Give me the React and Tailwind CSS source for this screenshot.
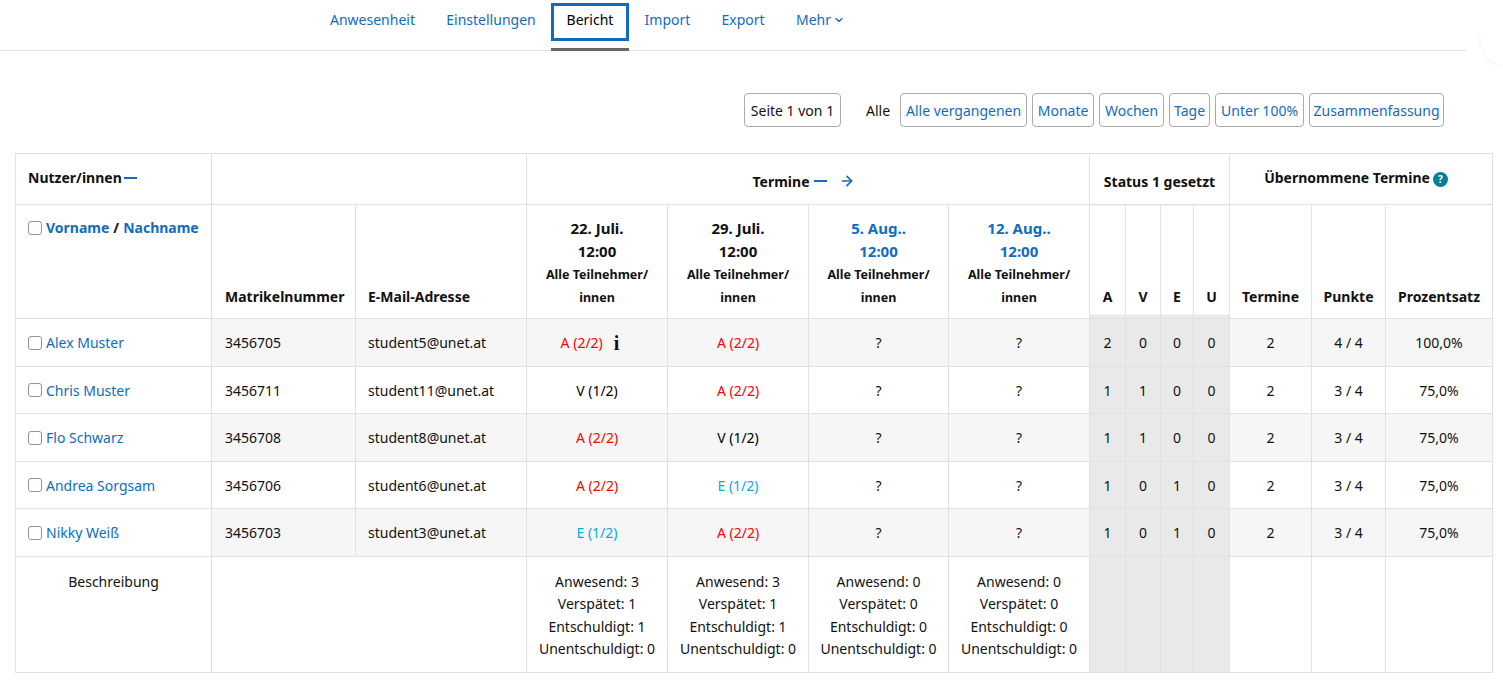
import { ChevronDown, ArrowRight } from 'lucide-react';

const tabs = [
    { label: 'Anwesenheit', width: 'w-[117px]' },
    { label: 'Einstellungen', width: 'w-[120px]' },
    { label: 'Bericht', width: 'w-[78px]' },
    { label: 'Import', width: 'w-[77px]' },
    { label: 'Export', width: 'w-[74px]' },
];
const filters = [
    { label: 'Alle vergangenen', width: 'w-[127px]' },
    { label: 'Monate', width: 'w-[62px]' },
    { label: 'Wochen', width: 'w-[65px]' },
    { label: 'Tage', width: 'w-[41px]' },
    { label: 'Unter 100%', width: 'w-[89px]' },
    { label: 'Zusammenfassung', width: 'w-[135px]' },
];

const dates = [
    { day: '22. Juli.', link: false },
    { day: '29. Juli.', link: false },
    { day: '5. Aug..', link: true },
    { day: '12. Aug..', link: true },
];

const statusColor = {
    A: 'text-[#ff0000]',
    V: 'text-black',
    E: 'text-[#06a9e6]',
};

const students = [
    { name: 'Alex Muster', id: '3456705', mail: 'student5@unet.at', s1: 'A (2/2)', s2: 'A (2/2)', counts: [2, 0, 0, 0], points: '4 / 4', pct: '100,0%', info: true },
    { name: 'Chris Muster', id: '3456711', mail: 'student11@unet.at', s1: 'V (1/2)', s2: 'A (2/2)', counts: [1, 1, 0, 0], points: '3 / 4', pct: '75,0%' },
    { name: 'Flo Schwarz', id: '3456708', mail: 'student8@unet.at', s1: 'A (2/2)', s2: 'V (1/2)', counts: [1, 1, 0, 0], points: '3 / 4', pct: '75,0%' },
    { name: 'Andrea Sorgsam', id: '3456706', mail: 'student6@unet.at', s1: 'A (2/2)', s2: 'E (1/2)', counts: [1, 0, 1, 0], points: '3 / 4', pct: '75,0%' },
    { name: 'Nikky Weiß', id: '3456703', mail: 'student3@unet.at', s1: 'E (1/2)', s2: 'A (2/2)', counts: [1, 0, 1, 0], points: '3 / 4', pct: '75,0%' },
];

const summaries = [
    [3, 1, 1, 0],
    [3, 1, 1, 0],
    [0, 0, 0, 0],
    [0, 0, 0, 0],
];

const cell = 'border border-[#dee2e6] p-0';
const body = 'border border-[#dee2e6] p-0 pt-[1px]';

const Check = () => (
    <span className="inline-block w-[14px] h-[14px] rounded-[3px] border border-[#8f959e] bg-white shrink-0" />
);

const App = () => {
    return (
        <div className="relative w-[1503px] h-[680px] overflow-hidden bg-white text-[14px] text-[#111] font-['Noto_Sans','Open_Sans',sans-serif]">
            {/* Tabs */}
            <div className="w-[1466px] h-[51px] border-b border-[#dee2e6] flex items-start pl-[314px]">
                {tabs.map((tab) => (
                    tab.label === 'Bericht' ? (
                        <div key={tab.label} className={`${tab.width} h-[51px] pt-[3px] border-b-[3px] border-[#666]`}>
                            <div className="h-[38px] pb-[5px] border-[3px] border-[#0f6cbf] flex items-center justify-center text-black">{tab.label}</div>
                        </div>
                    ) : (
                        <div key={tab.label} className={`${tab.width} h-[39px] flex items-center justify-center text-[#0f6cbf]`}>{tab.label}</div>
                    )
                ))}
                <div className="h-[39px] px-[16px] flex items-center gap-[2px] text-[#0f6cbf]">
                    Mehr <ChevronDown size={12} strokeWidth={2.5} />
                </div>
            </div>

            {/* faint shadow in the top right corner */}
            <svg className="absolute left-[1470px] top-[30px]" width="33" height="40" fill="none">
                <path d="M9 5 C9 20 16 32 33 38" stroke="#fbfbfb" strokeWidth="3" />
            </svg>

            {/* Filter */}
            <div className="mt-[42px] h-[34px] flex items-center pl-[744px]">
                <div className="w-[97px] h-[34px] border border-[#aaa] rounded-[4px] flex items-center justify-center mr-[25px] whitespace-nowrap">Seite 1 von 1</div>
                <span className="mr-[10px]">Alle</span>
                <div className="flex gap-[5px]">
                    {filters.map((f) => (
                        <div key={f.label} className={`${f.width} h-[34px] border border-[#aaa] rounded-[4px] flex items-center justify-center whitespace-nowrap text-[#0f6cbf]`}>{f.label}</div>
                    ))}
                </div>
            </div>

            {/* Report table */}
            <div className="mt-[26px] ml-[15px]">
                <table className="table-fixed border-collapse w-[1477px]">
                    <colgroup>
                        <col className="w-[196px]" />
                        <col className="w-[144px]" />
                        <col className="w-[171px]" />
                        <col className="w-[141px]" />
                        <col className="w-[141px]" />
                        <col className="w-[140px]" />
                        <col className="w-[141px]" />
                        <col className="w-[36px]" />
                        <col className="w-[35px]" />
                        <col className="w-[33px]" />
                        <col className="w-[36px]" />
                        <col className="w-[82px]" />
                        <col className="w-[74px]" />
                        <col className="w-[107px]" />
                    </colgroup>
                    <thead>
                        <tr className="h-[51px]">
                            <th className={`${cell} text-left pl-[12px] pb-[4px] font-bold`}>
                                Nutzer/innen
                                <span className="inline-block w-[13px] h-[2px] bg-[#0f6cbf] ml-[2px] align-[4px]" />
                            </th>
                            <th colSpan={2} className={cell} />
                            <th colSpan={4} className={`${cell} text-center pt-[4px] pr-[9px] font-bold`}>
                                <span className="inline-flex items-center">
                                    Termine
                                    <span className="w-[13px] h-[2px] bg-[#0f6cbf] ml-[4px]" />
                                    <ArrowRight size={16} strokeWidth={2.5} className="ml-[12px] text-[#0f6cbf]" />
                                </span>
                            </th>
                            <th colSpan={4} className={`${cell} text-center pt-[4px] font-bold`}>Status 1 gesetzt</th>
                            <th colSpan={3} className={`${cell} text-center pb-[4px] pr-[10px] font-bold`}>
                                <span className="inline-flex items-center">
                                    Übernommene Termine
                                    <span className="ml-[3px] mt-[4px] w-[15px] h-[15px] rounded-full bg-[#008196] text-white text-[10px] font-bold flex items-center justify-center">?</span>
                                </span>
                            </th>
                        </tr>
                        <tr className="h-[114px]">
                            <th className={`${cell} align-top text-left pl-[12px] pt-[12px] font-bold`}>
                                <div className="flex items-center gap-[4px]">
                                    <Check />
                                    <span className="text-[#0f6cbf]">Vorname</span>
                                    <span>/</span>
                                    <span className="text-[#0f6cbf]">Nachname</span>
                                </div>
                            </th>
                            <th className={`${cell} align-bottom text-left pl-[13px] pb-[11px] font-bold`}>Matrikelnummer</th>
                            <th className={`${cell} align-bottom text-left pl-[12px] pb-[11px] font-bold`}>E-Mail-Adresse</th>
                            {dates.map((d) => (
                                <th key={d.day} className={`${cell} align-top pt-[12px] text-center font-bold`}>
                                    <div className={`text-[15px] leading-[23px] ${d.link ? 'text-[#0f6cbf]' : ''}`}>{d.day}</div>
                                    <div className={`text-[15px] leading-[23px] ${d.link ? 'text-[#0f6cbf]' : ''}`}>12:00</div>
                                    <div className="text-[12.5px] leading-[23px]">Alle Teilnehmer/</div>
                                    <div className="text-[12.5px] leading-[23px]">innen</div>
                                </th>
                            ))}
                            {['A', 'V', 'E', 'U'].map((s) => (
                                <th key={s} className={`${cell} align-bottom pb-[11px] text-center font-bold bg-[linear-gradient(to_top,#e9e9e9_4px,transparent_4px)]`}>{s}</th>
                            ))}
                            {['Termine', 'Punkte', 'Prozentsatz'].map((s) => (
                                <th key={s} className={`${cell} align-bottom pb-[11px] text-center font-bold`}>{s}</th>
                            ))}
                        </tr>
                    </thead>
                    <tbody>
                        {students.map((st, i) => (
                            <tr key={st.id} className={`h-[47.5px] ${i % 2 === 0 ? 'bg-[#f6f6f7]' : 'bg-white'}`}>
                                <td className={`${body} bg-white pl-[12px]`}>
                                    <div className="flex items-center gap-[4px]">
                                        <Check />
                                        <span className="text-[#0f6cbf]">{st.name}</span>
                                    </div>
                                </td>
                                <td className={`${body} pl-[13px]`}>{st.id}</td>
                                <td className={`${body} pl-[12px]`}>{st.mail}</td>
                                <td className={`${body} text-center`}>
                                    {st.info ? (
                                        <span className="inline-flex items-center pr-[14px]">
                                            <span className={statusColor[st.s1[0]]}>{st.s1}</span>
                                            <span className="ml-[11px] font-['Liberation_Serif',serif] font-bold text-[20px] leading-none">i</span>
                                        </span>
                                    ) : (
                                        <span className={statusColor[st.s1[0]]}>{st.s1}</span>
                                    )}
                                </td>
                                <td className={`${body} text-center`}><span className={statusColor[st.s2[0]]}>{st.s2}</span></td>
                                <td className={`${body} text-center`}>?</td>
                                <td className={`${body} text-center`}>?</td>
                                {st.counts.map((c, j) => (
                                    <td key={j} className={`${body} text-center bg-[#e9e9e9]`}>{c}</td>
                                ))}
                                <td className={`${body} text-center`}>2</td>
                                <td className={`${body} text-center`}>{st.points}</td>
                                <td className={`${body} text-center`}>{st.pct}</td>
                            </tr>
                        ))}
                        <tr className="h-[116px]">
                            <td className={`${cell} align-top text-center pt-[14px]`}>Beschreibung</td>
                            <td colSpan={2} className={cell} />
                            {summaries.map((s, i) => (
                                <td key={i} className={`${cell} align-top pt-[14px] text-center leading-[22.5px]`}>
                                    <div>Anwesend: {s[0]}</div>
                                    <div>Verspätet: {s[1]}</div>
                                    <div>Entschuldigt: {s[2]}</div>
                                    <div>Unentschuldigt: {s[3]}</div>
                                </td>
                            ))}
                            {[0, 1, 2, 3].map((j) => (
                                <td key={j} className={`${cell} bg-[#e9e9e9]`} />
                            ))}
                            <td className={cell} />
                            <td className={cell} />
                            <td className={cell} />
                        </tr>
                    </tbody>
                </table>
            </div>
        </div>
    );
};

export default App;
